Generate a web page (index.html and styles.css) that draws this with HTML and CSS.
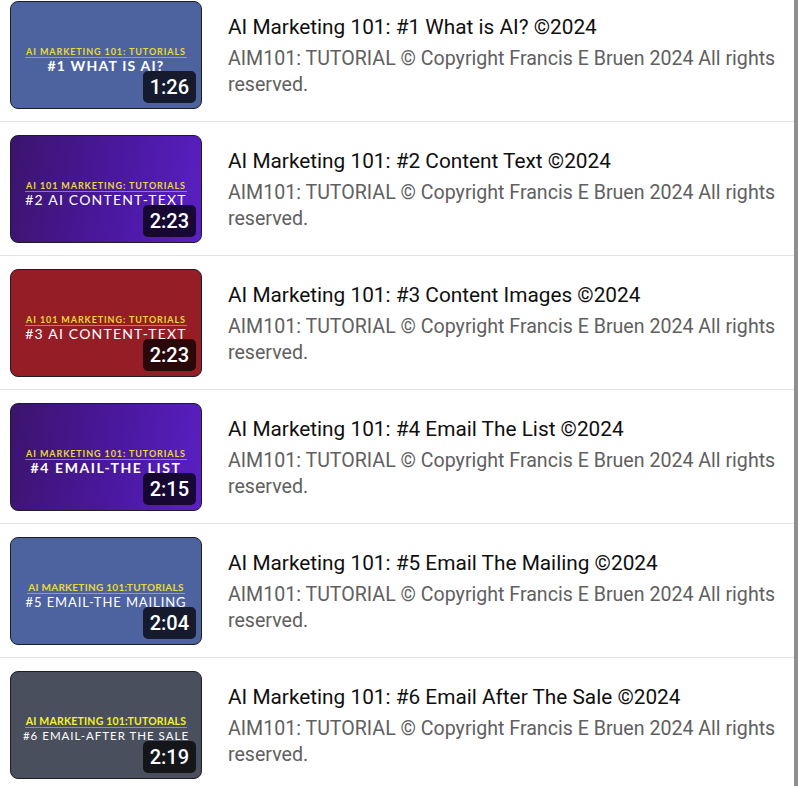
FILE: index.html
```html
<!DOCTYPE html>
<html lang="en">
<head>
    <meta charset="UTF-8">
    <meta name="viewport" content="width=device-width, initial-scale=1.0">
    <title>AI Marketing 101</title>
    <link rel="stylesheet" href="styles.css">
</head>
<body>

    <div class="page">
        <div class="video-list">
            <!-- 1 -->
            <div class="video-row">
                <div class="thumb thumb-blue">
                    <div class="thumb-kicker">AI MARKETING 101: TUTORIALS</div>
                    <div class="thumb-title bold">#1 WHAT IS AI?</div>
                    <div class="duration">1:26</div>
                </div>
                <div class="video-meta">
                    <div class="video-title">AI Marketing 101: #1 What is AI? ©2024</div>
                    <div class="video-desc">AIM101: TUTORIAL © Copyright Francis E Bruen 2024 All rights reserved.</div>
                </div>
            </div>

            <!-- 2 -->
            <div class="video-row">
                <div class="thumb thumb-purple">
                    <div class="thumb-kicker">AI 101 MARKETING: TUTORIALS</div>
                    <div class="thumb-title">#2 AI CONTENT-TEXT</div>
                    <div class="duration">2:23</div>
                </div>
                <div class="video-meta">
                    <div class="video-title">AI Marketing 101: #2 Content Text ©2024</div>
                    <div class="video-desc">AIM101: TUTORIAL © Copyright Francis E Bruen 2024 All rights reserved.</div>
                </div>
            </div>

            <!-- 3 -->
            <div class="video-row">
                <div class="thumb thumb-red">
                    <div class="thumb-kicker">AI 101 MARKETING: TUTORIALS</div>
                    <div class="thumb-title">#3 AI CONTENT-TEXT</div>
                    <div class="duration">2:23</div>
                </div>
                <div class="video-meta">
                    <div class="video-title">AI Marketing 101: #3 Content Images ©2024</div>
                    <div class="video-desc">AIM101: TUTORIAL © Copyright Francis E Bruen 2024 All rights reserved.</div>
                </div>
            </div>

            <!-- 4 -->
            <div class="video-row">
                <div class="thumb thumb-purple">
                    <div class="thumb-kicker">AI MARKETING 101: TUTORIALS</div>
                    <div class="thumb-title bold wide">#4 EMAIL-THE LIST</div>
                    <div class="duration">2:15</div>
                </div>
                <div class="video-meta">
                    <div class="video-title">AI Marketing 101: #4 Email The List ©2024</div>
                    <div class="video-desc">AIM101: TUTORIAL © Copyright Francis E Bruen 2024 All rights reserved.</div>
                </div>
            </div>

            <!-- 5 -->
            <div class="video-row">
                <div class="thumb thumb-blue">
                    <div class="thumb-kicker tight">AI MARKETING 101:TUTORIALS</div>
                    <div class="thumb-title medium">#5 EMAIL-THE MAILING</div>
                    <div class="duration">2:04</div>
                </div>
                <div class="video-meta">
                    <div class="video-title">AI Marketing 101: #5 Email The Mailing ©2024</div>
                    <div class="video-desc">AIM101: TUTORIAL © Copyright Francis E Bruen 2024 All rights reserved.</div>
                </div>
            </div>

            <!-- 6 -->
            <div class="video-row">
                <div class="thumb thumb-gray">
                    <div class="thumb-kicker tight bright">AI MARKETING 101:TUTORIALS</div>
                    <div class="thumb-title small">#6 EMAIL-AFTER THE SALE</div>
                    <div class="duration">2:19</div>
                </div>
                <div class="video-meta">
                    <div class="video-title">AI Marketing 101: #6 Email After The Sale ©2024</div>
                    <div class="video-desc">AIM101: TUTORIAL © Copyright Francis E Bruen 2024 All rights reserved.</div>
                </div>
            </div>
        </div>

        <!-- barre de défilement -->
        <div class="scrollbar"></div>
    </div>

</body>
</html>
```

FILE: styles.css
```css
* {
    box-sizing: border-box;
    margin: 0;
    padding: 0;
}

body {
    font-family: Roboto, "Liberation Sans", Arial, sans-serif;
    background-color: #fff;
    overflow: hidden;
    height: 786px;
}

.page {
    display: flex;
    height: 786px;
}

.video-list {
    flex: 1;
    margin-top: -12px; /* liste déjà défilée */
}

.video-row {
    display: flex;
    gap: 26px;
    padding: 13px 0 12px 10px;
    border-bottom: 1px solid #e5e5e5;
}

.scrollbar {
    width: 4px;
    background-color: #8f8f8f;
}

/* Miniatures */
.thumb {
    position: relative;
    flex: none;
    width: 192px;
    height: 108px;
    border-radius: 8px;
    border: 1px solid #1d1d28;
    display: flex;
    flex-direction: column;
    align-items: center;
    justify-content: center;
    padding-top: 9px;
    font-family: Lato, "Open Sans", sans-serif;
    overflow: hidden;
}

.thumb-blue {
    background-color: #4d63a0;
}

.thumb-purple {
    background: linear-gradient(100deg, #3b146c 0%, #4a18a0 55%, #5a20c4 100%);
}

.thumb-red {
    background-color: #951e26;
}

.thumb-gray {
    background-color: #4a4f5d;
}

.thumb-kicker {
    color: #e8d83a;
    font-size: 9px;
    font-weight: 700;
    letter-spacing: 0.9px;
    line-height: 11px;
    border-bottom: 1px solid rgba(200, 200, 200, 0.55);
    padding: 0 1px;
}

.thumb-kicker.tight {
    font-size: 10px;
    letter-spacing: 0.3px;
}

.thumb-kicker.bright {
    color: #f4f030;
    font-size: 10.5px;
    letter-spacing: 0.2px;
}

.thumb-title {
    color: #fff;
    font-size: 14px;
    letter-spacing: 1.2px;
    line-height: 16px;
    white-space: nowrap;
}

.thumb-title.bold {
    font-weight: 700;
}

.thumb-title.wide {
    letter-spacing: 1.6px;
}

.thumb-title.medium {
    font-size: 13px;
    letter-spacing: 0.9px;
}

.thumb-title.small {
    font-size: 11.5px;
    letter-spacing: 1px;
}

.duration {
    position: absolute;
    right: 5px;
    bottom: 5px;
    background-color: rgba(0, 0, 0, 0.72);
    color: #fff;
    font-family: Roboto, "Liberation Sans", sans-serif;
    font-size: 20px;
    font-weight: 500;
    line-height: 32px;
    padding: 0 7px;
    border-radius: 5px;
}

/* Texte */
.video-meta {
    flex: 1;
    padding-top: 12px;
    padding-right: 14px;
}

.video-title {
    font-size: 20.8px;
    line-height: 28px;
    color: #0f0f0f;
}

.video-desc {
    margin-top: 5px;
    font-size: 19.6px;
    line-height: 26px;
    color: #606060;
}
```
